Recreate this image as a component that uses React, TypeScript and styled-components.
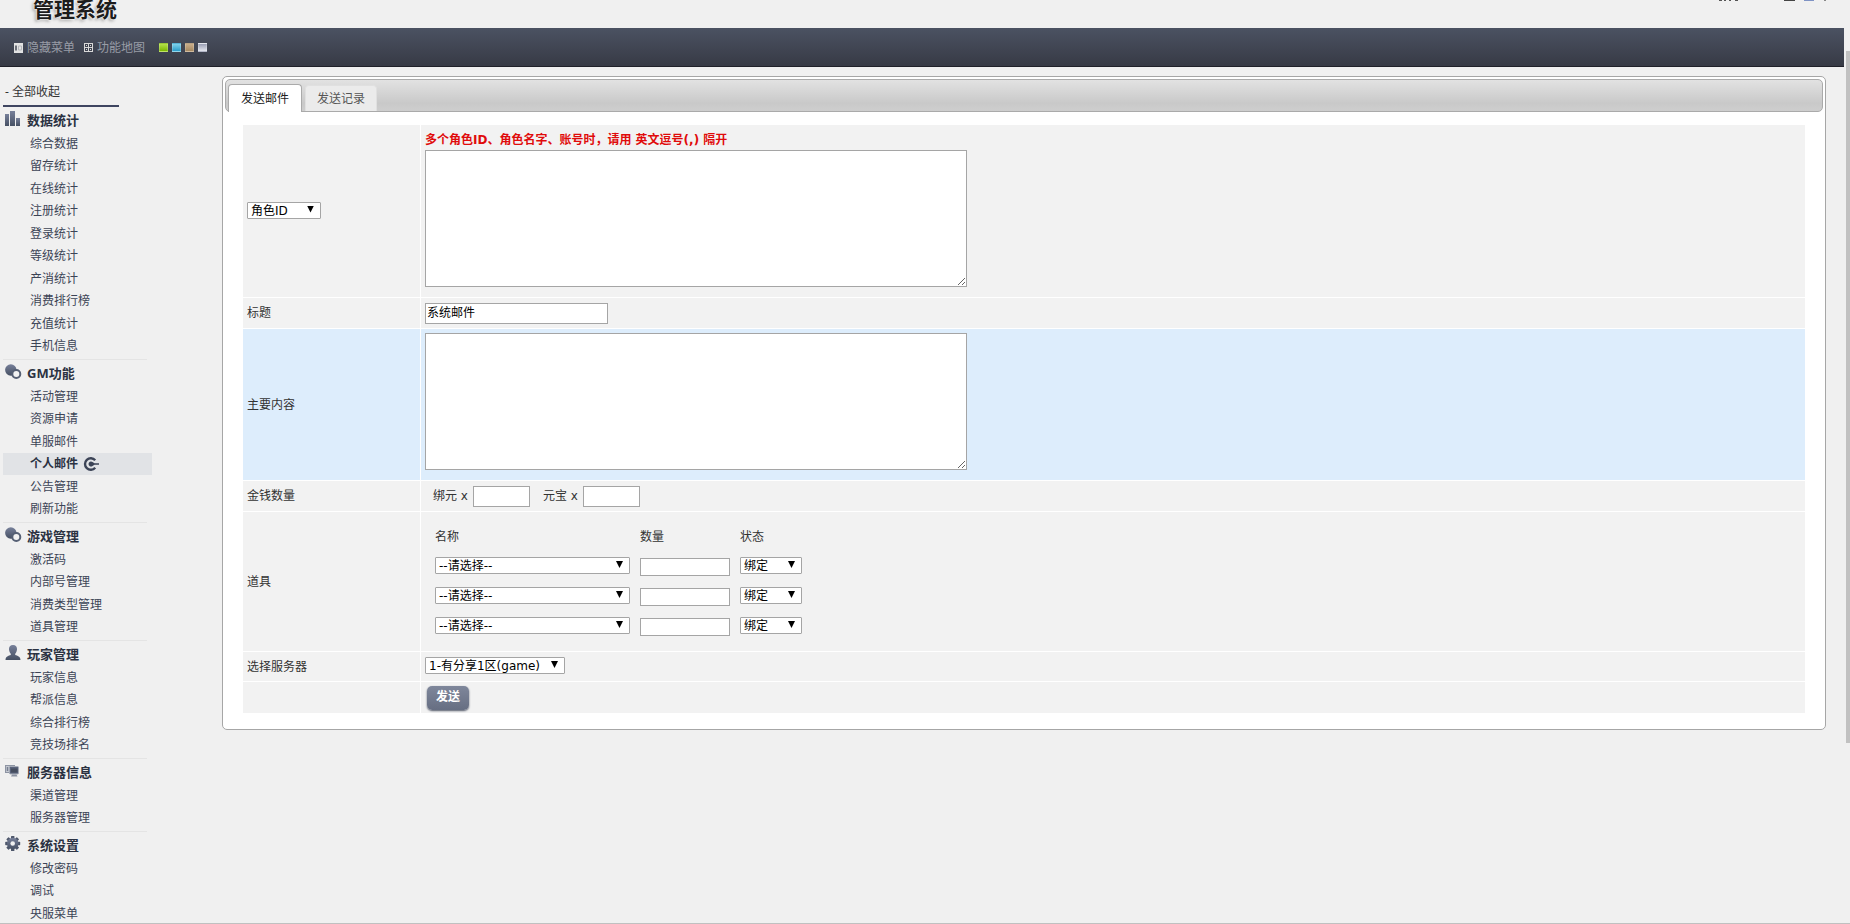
import React from "react";
import styled, { createGlobalStyle } from "styled-components";

const GlobalStyle = createGlobalStyle`
  *, *::before, *::after { box-sizing: border-box; }
  body {
    margin: 0;
    background: #f0f0f0;
    color: #333;
    font: 12px/22px "Noto Sans", "Noto Sans CJK SC", sans-serif;
  }
  button, input, select, textarea { font: inherit; margin: 0; }
  a { color: inherit; text-decoration: none; }
`;

const Frame = styled.div`
  display: flex;
  height: 100vh;
  overflow: hidden;
  border-bottom: 1px solid #c0c0c0;
`;

const Page = styled.div`
  flex: 1;
  min-width: 0;
`;

const ScrollRail = styled.div`
  width: 6px;
  padding: 51px 0 0 2px;
`;

const ScrollThumb = styled.div`
  height: 692px;
  background: #c1c1c1;
`;

const Header = styled.header`
  display: flex;
  justify-content: space-between;
  align-items: flex-start;
  height: 28px;
  overflow: hidden;
  padding: 0 14px 0 33px;
`;

const Logo = styled.h1`
  margin: 0;
  font-size: 21px;
  font-weight: 700;
  line-height: 18px;
  color: #1c1c1c;
  text-shadow: 0 0 2px #fff, 0 0 2px #fff, -2px 2px 3px #aaa;
`;

const Nav = styled.nav`
  display: flex;
  align-items: center;
  height: 39px;
  padding: 1px 14px 0;
  border-bottom: 1px solid #1f2029;
  background: linear-gradient(#4b5262, #373a45);
`;

const NavButton = styled.button`
  display: flex;
  align-items: center;
  gap: 4px;
  margin-right: 9px;
  padding: 0;
  border: 0;
  background: none;
  color: #989ca6;
  cursor: pointer;
`;

const Swatches = styled.div`
  display: flex;
  gap: 4px;
  margin-left: 5px;
`;

const Swatch = styled.button<{ $from: string; $to: string }>`
  width: 9px;
  height: 9px;
  padding: 0;
  border: 1px solid rgba(255, 255, 255, 0.2);
  background: linear-gradient(${(p) => p.$from}, ${(p) => p.$to});
`;

const Body = styled.div`
  display: flex;
  align-items: flex-start;
`;

const Sidebar = styled.aside`
  width: 222px;
  flex: none;
  padding: 13px 0 0 3px;
`;

const CollapseAll = styled.button`
  display: block;
  width: 116px;
  height: 27px;
  padding: 0 0 1px 2px;
  border: 0;
  border-bottom: 2px solid #3e4560;
  background: none;
  color: #333;
  text-align: left;
`;

const Group = styled.section`
  width: 149px;
  & + & { padding-top: 1px; }
  & + &::before {
    content: "";
    display: block;
    width: 144px;
    height: 1px;
    background: #e4e4e4;
  }
`;

const GroupTitle = styled.h2`
  display: flex;
  align-items: center;
  gap: 4px;
  height: 26px;
  margin: 0;
  padding: 2px 0 2px 2px;
  color: #2b3242;
  font-size: 13px;
  font-weight: 700;
  svg { margin-bottom: 2px; }
`;

const Menu = styled.ul`
  margin: 0;
  padding: 0;
  list-style: none;
`;

const MenuItem = styled.li<{ $active?: boolean }>`
  height: 22px;
  padding-left: 27px;
  background: ${(p) => (p.$active ? "#e1e3e6" : "transparent")};
  font-weight: ${(p) => (p.$active ? 700 : 400)};
  color: ${(p) => (p.$active ? "#2b3242" : "#3c4456")};
  &:nth-child(even) { margin-bottom: 1px; }
  a {
    display: flex;
    align-items: center;
    gap: 5px;
  }
`;

const Panel = styled.main`
  flex: 1;
  min-width: 0;
  margin: 9px 18px 0 0;
  padding: 2px;
  border: 1px solid #a6a6a6;
  border-radius: 5px;
  background: #fff;
`;

const Tabs = styled.div`
  display: flex;
  align-items: flex-end;
  gap: 3px;
  height: 33px;
  padding: 0 2px;
  border: 1px solid #aaa;
  border-radius: 5px;
  background: linear-gradient(#e2e2e2, #c9c9c9 75%, #cecece);
`;

const Tab = styled.button<{ $active?: boolean }>`
  height: ${(p) => (p.$active ? 28 : 26)}px;
  margin-bottom: ${(p) => (p.$active ? -1 : 0)}px;
  padding: ${(p) => (p.$active ? "0 12px" : "0 11px")};
  border: 1px solid ${(p) => (p.$active ? "#aaa" : "#e0e0e0")};
  border-bottom: 0;
  border-radius: 4px 4px 0 0;
  background: ${(p) => (p.$active ? "#fff" : "#ebebeb")};
  color: ${(p) => (p.$active ? "#212121" : "#555")};
`;

const FormTable = styled.table`
  width: calc(100% - 34px);
  margin: 12px 17px 13px;
  border-spacing: 1px;
  table-layout: fixed;
`;

const Row = styled.tr<{ $height: number; $active?: boolean }>`
  height: ${(p) => p.$height}px;
  background: ${(p) => (p.$active ? "#ddedfc" : "#f2f2f2")};
`;

const LabelCell = styled.th`
  width: 177px;
  padding: 0 4px;
  font-weight: 400;
  text-align: left;
  vertical-align: middle;
`;

const FieldCell = styled.td`
  padding: 0 4px;
  vertical-align: middle;
`;

const Hint = styled.p`
  margin: 0;
  padding-top: 1px;
  color: #e00b0b;
  font-family: "DejaVu Sans", "Noto Sans CJK SC", sans-serif;
  font-weight: 700;
  line-height: 20px;
`;

const TextArea = styled.textarea`
  display: block;
  width: 542px;
  height: 137px;
  margin-bottom: 6px;
  padding: 2px;
  border: 1px solid #a5a5a5;
  background: #fff;
`;

const TextInput = styled.input<{ $width: number; $height?: number }>`
  display: block;
  width: ${(p) => p.$width}px;
  height: ${(p) => p.$height ?? 21}px;
  padding: 0 1px;
  border: 1px solid #a5a5a5;
  background: #fff;
  color: #000;
`;

const SelectBox = styled.span<{ $width: number }>`
  position: relative;
  display: block;
  width: ${(p) => p.$width}px;
  height: 17px;
  margin-bottom: 2px;
  &::after {
    content: "";
    position: absolute;
    top: 4px;
    right: 7px;
    width: 7px;
    height: 7px;
    background: #000;
    clip-path: polygon(0 0, 100% 0, 50% 100%);
    pointer-events: none;
  }
`;

const SelectControl = styled.select`
  appearance: none;
  display: block;
  width: 100%;
  height: 17px;
  padding: 1px 3px 0;
  border: 1px solid #a5a5a5;
  border-radius: 1px;
  background: #fff;
  color: #000;
  font-family: "DejaVu Sans", "Noto Sans CJK SC", sans-serif;
  line-height: 15px;
`;

const Money = styled.div`
  display: flex;
  gap: 13px;
  padding-left: 8px;
  font-family: "DejaVu Sans", "Noto Sans CJK SC", sans-serif;
  label {
    display: flex;
    align-items: center;
    gap: 5px;
  }
`;

const ItemTable = styled.table`
  margin: 0 0 0 6px;
  border-spacing: 0;
  th, td {
    height: 30px;
    padding: 0 6px 0 4px;
    font-weight: 400;
    text-align: left;
  }
`;

const SendButton = styled.button`
  display: block;
  width: 42px;
  height: 24px;
  margin-left: 2px;
  padding: 0 0 1px;
  border: 0;
  border-radius: 5px;
  background: linear-gradient(#7f879b, #666e82);
  box-shadow: 0 1px 2px #555b6b;
  color: #fff;
  font-weight: 700;
  line-height: 20px;
`;

type IconName = "bars" | "circles" | "user" | "server" | "gear";

const GroupIcon = ({ name }: { name: IconName }) => (
  <svg width="18" height="16" viewBox="0 0 18 16" fill="#5c6579" aria-hidden="true">
    <defs>
      <linearGradient id="steel" x1="0" y1="0" x2="0" y2="1">
        <stop offset="0" stopColor="#77809a" />
        <stop offset="1" stopColor="#465063" />
      </linearGradient>
    </defs>
    {name === "bars" && (
      <g fill="url(#steel)">
        <rect x="0" y="3" width="4" height="12" />
        <rect x="5" y="0" width="5" height="15" />
        <rect x="11" y="7" width="4" height="8" />
      </g>
    )}
    {name === "circles" && (
      <>
        <circle cx="5.800" cy="6" r="5.700" fill="url(#steel)" />
        <circle cx="11.300" cy="10" r="4" fill="#f3f3f3" stroke="#566074" strokeWidth="2" />
      </>
    )}
    {name === "user" && (
      <path
        fill="url(#steel)"
        d="M8 0c2.700 0 4.300 1.900 4 4.500-.2 2-.9 3.300-1.800 4.200v1.300c2.300.8 5.200 1.300 5.300 5H.5c.1-3.700 3-4.200 5.300-5V8.700C4.900 7.800 4.200 6.500 4 4.500 3.700 1.900 5.300 0 8 0z"
      />
    )}
    {name === "server" && (
      <>
        <rect x=".5" y="2.500" width="9" height="7" fill="#c4c8d0" stroke="#8d94a3" />
        <path d="M2.500 4v4" stroke="#777f90" strokeWidth="1.500" />
        <rect x="4.500" y="3.500" width="9" height="7.500" rx="1" fill="#59627a" stroke="#a4aab6" />
        <rect x="6" y="5.500" width="6.500" height="4" fill="#454d5f" />
        <path d="M7 11.500h4.500l1 2H6z" fill="#8b92a1" />
      </>
    )}
    {name === "gear" && (
      <>
        <g fill="#4d566a">
          {[0, 45, 90, 135].map((angle) => (
            <rect
              key={angle}
              x="6"
              y="0"
              width="3.400"
              height="15"
              rx=".6"
              transform={`rotate(${angle} 7.700 7.500)`}
            />
          ))}
        </g>
        <circle cx="7.700" cy="7.500" r="5.700" fill="url(#steel)" />
        <circle cx="7.700" cy="7.500" r="2.300" fill="#f0f0f0" />
      </>
    )}
  </svg>
);

const CurrentIcon = () => (
  <svg width="16" height="16" viewBox="0 0 16 16" aria-hidden="true">
    <path d="M12.200 4.200A5.800 5.800 0 1 0 12.200 11.800" fill="none" stroke="#3b4356" strokeWidth="2.400" />
    <path d="M5.500 8a2.500 2.500 0 0 1 4-2l2 1.200H16v1.600h-4.500l-2 1.200a2.500 2.500 0 0 1-4-2z" fill="#3b4356" />
  </svg>
);

const HideMenuIcon = () => (
  <svg width="9" height="10" viewBox="0 0 9 10" aria-hidden="true">
    <rect width="9" height="10" fill="#e2e2e2" />
    <path d="M1 2.500h2v5H1z" fill="#6b6f78" />
    <path d="M4.500 3h3v4h-3z" stroke="#b4b6bb" fill="none" />
  </svg>
);

const MapIcon = () => (
  <svg width="9" height="9" viewBox="0 0 9 9" aria-hidden="true">
    <rect width="9" height="9" fill="#d8d8d8" />
    <path d="M1 1h3v3H1zM5 1h3v3H5zM1 5h3v3H1zM5 5h3v3H5z" fill="#3f4350" />
    <path d="M2 2h1v1H2zM6 2h1v1H6zM2 6h1v1H2zM6 6h1v1H6z" fill="#d8d8d8" />
  </svg>
);

const HeaderTools = () => (
  <svg width="114" height="2" viewBox="0 0 114 2" aria-hidden="true">
    <path d="M3 0h3v1H3zM8 0h2v1H8zM13 0h2v1h-2zM19 0h3v1h-3z" fill="#555" />
    <rect x="68" width="11" height="1" fill="#444" />
    <rect x="88" width="10" height="1" fill="#7f93c4" />
    <rect x="108" width="2" height="1" fill="#888" />
  </svg>
);

const groups: { title: string; icon: IconName; items: string[] }[] = [
  {
    title: "数据统计",
    icon: "bars",
    items: [
      "综合数据",
      "留存统计",
      "在线统计",
      "注册统计",
      "登录统计",
      "等级统计",
      "产消统计",
      "消费排行榜",
      "充值统计",
      "手机信息",
    ],
  },
  {
    title: "GM功能",
    icon: "circles",
    items: ["活动管理", "资源申请", "单服邮件", "个人邮件", "公告管理", "刷新功能"],
  },
  {
    title: "游戏管理",
    icon: "circles",
    items: ["激活码", "内部号管理", "消费类型管理", "道具管理"],
  },
  {
    title: "玩家管理",
    icon: "user",
    items: ["玩家信息", "帮派信息", "综合排行榜", "竞技场排名"],
  },
  { title: "服务器信息", icon: "server", items: ["渠道管理", "服务器管理"] },
  { title: "系统设置", icon: "gear", items: ["修改密码", "调试", "央服菜单"] },
];

const ACTIVE_ITEM = "个人邮件";

type SelectProps = { width: number; label?: string; id?: string; option: string };

const Select = ({ width, label, id, option }: SelectProps) => (
  <SelectBox $width={width}>
    <SelectControl id={id} aria-label={label}>
      <option>{option}</option>
    </SelectControl>
  </SelectBox>
);

export default function App() {
  return (
    <>
      <GlobalStyle />
      <Frame>
        <Page>
          <Header>
            <Logo>管理系统</Logo>
            <HeaderTools />
          </Header>
          <Nav>
            <NavButton>
              <HideMenuIcon />
              隐藏菜单
            </NavButton>
            <NavButton>
              <MapIcon />
              功能地图
            </NavButton>
            <Swatches>
              <Swatch $from="#b4e04a" $to="#7cb800" aria-label="绿色" />
              <Swatch $from="#7fd0ea" $to="#2a9cc8" aria-label="蓝色" />
              <Swatch $from="#c9ad8a" $to="#a58860" aria-label="棕色" />
              <Swatch $from="#9a9fb4" $to="#e4e6ee" aria-label="灰色" />
            </Swatches>
          </Nav>
          <Body>
            <Sidebar>
              <CollapseAll>- 全部收起</CollapseAll>
              {groups.map((group) => (
                <Group key={group.title}>
                  <GroupTitle>
                    <GroupIcon name={group.icon} />
                    {group.title}
                  </GroupTitle>
                  <Menu>
                    {group.items.map((item) => (
                      <MenuItem key={item} $active={item === ACTIVE_ITEM}>
                        <a href="#">
                          {item}
                          {item === ACTIVE_ITEM && <CurrentIcon />}
                        </a>
                      </MenuItem>
                    ))}
                  </Menu>
                </Group>
              ))}
            </Sidebar>
            <Panel>
              <Tabs>
                <Tab $active>发送邮件</Tab>
                <Tab>发送记录</Tab>
              </Tabs>
              <FormTable>
                <tbody>
                  <Row $height={172}>
                    <LabelCell>
                      <Select width={74} label="收件人类型" option="角色ID" />
                    </LabelCell>
                    <FieldCell>
                      <Hint>多个角色ID、角色名字、账号时，请用 英文逗号(,) 隔开</Hint>
                      <TextArea aria-label="收件人" />
                    </FieldCell>
                  </Row>
                  <Row $height={30}>
                    <LabelCell>
                      <label htmlFor="subject">标题</label>
                    </LabelCell>
                    <FieldCell>
                      <TextInput id="subject" $width={183} defaultValue="系统邮件" />
                    </FieldCell>
                  </Row>
                  <Row $height={151} $active>
                    <LabelCell>
                      <label htmlFor="content">主要内容</label>
                    </LabelCell>
                    <FieldCell>
                      <TextArea id="content" />
                    </FieldCell>
                  </Row>
                  <Row $height={30}>
                    <LabelCell>金钱数量</LabelCell>
                    <FieldCell>
                      <Money>
                        <label>
                          绑元 x <TextInput $width={57} />
                        </label>
                        <label>
                          元宝 x <TextInput $width={57} />
                        </label>
                      </Money>
                    </FieldCell>
                  </Row>
                  <Row $height={139}>
                    <LabelCell>道具</LabelCell>
                    <FieldCell>
                      <ItemTable>
                        <thead>
                          <tr>
                            <th>名称</th>
                            <th>数量</th>
                            <th>状态</th>
                          </tr>
                        </thead>
                        <tbody>
                          {[1, 2, 3].map((n) => (
                            <tr key={n}>
                              <td>
                                <Select width={195} label={`道具${n}名称`} option="--请选择--" />
                              </td>
                              <td>
                                <TextInput $width={90} $height={18} aria-label={`道具${n}数量`} />
                              </td>
                              <td>
                                <Select width={62} label={`道具${n}状态`} option="绑定" />
                              </td>
                            </tr>
                          ))}
                        </tbody>
                      </ItemTable>
                    </FieldCell>
                  </Row>
                  <Row $height={29}>
                    <LabelCell>
                      <label htmlFor="server">选择服务器</label>
                    </LabelCell>
                    <FieldCell>
                      <Select id="server" width={140} option="1-有分享1区(game)" />
                    </FieldCell>
                  </Row>
                  <Row $height={31}>
                    <LabelCell />
                    <FieldCell>
                      <SendButton>发送</SendButton>
                    </FieldCell>
                  </Row>
                </tbody>
              </FormTable>
            </Panel>
          </Body>
        </Page>
        <ScrollRail>
          <ScrollThumb />
        </ScrollRail>
      </Frame>
    </>
  );
}
